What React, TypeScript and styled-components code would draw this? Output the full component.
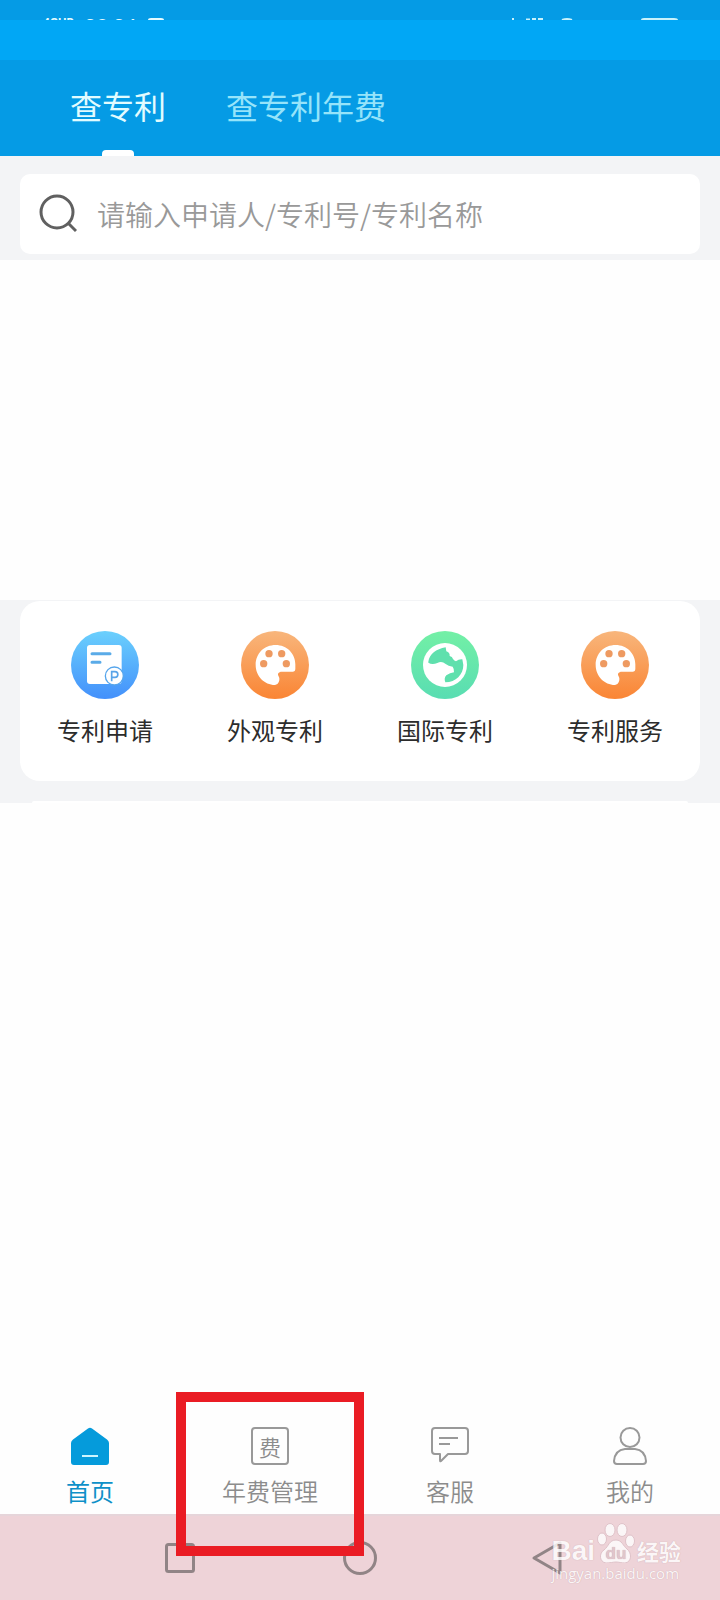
import React from "react";
import styled, { createGlobalStyle } from "styled-components";

const font = `"Noto Sans CJK SC", "Noto Sans", sans-serif`;

const GlobalStyle = createGlobalStyle`
  * { box-sizing: border-box; }
  body { margin: 0; background: #fefefe; font-family: ${font}; }
  button, input { font-family: inherit; border: 0; padding: 0; margin: 0; background: none; }
  svg { display: block; }
`;

const Page = styled.div`
  position: relative;
  display: flex;
  flex-direction: column;
  min-height: 100vh;
`;

const StatusBar = styled.div`
  display: flex;
  align-items: flex-start;
  gap: 10px;
  height: 20px;
  padding: 17px 42px 0 43px;
  overflow: hidden;
  background: #059be5;
  color: #e6fbff;
`;

const Network = styled.span`
  font: 700 12px/12px Roboto, sans-serif;
`;

const Clock = styled.span`
  font: 400 21px/20px Roboto, sans-serif;
`;

const StatusIcons = styled.svg`
  margin-left: auto;
  flex: none;
`;

const Banner = styled.div`
  height: 40px;
  background: #01a7f5;
`;

const TopTabs = styled.nav`
  display: flex;
  gap: 60px;
  height: 96px;
  padding: 0 70px;
  background: #059be5;
`;

const TopTab = styled.button<{ $active?: boolean }>`
  display: flex;
  flex-direction: column;
  align-items: center;
  justify-content: space-between;
  padding-top: 22px;
  font-size: 32px;
  line-height: 46px;
  color: ${(p) => (p.$active ? "#e2fcff" : "#96e4fa")};

  &::after {
    content: "";
    width: 32px;
    height: 6px;
    border-radius: 4px 4px 0 0;
    background: ${(p) => (p.$active ? "#fff" : "transparent")};
  }
`;

const SearchSection = styled.section`
  padding: 18px 20px 6px;
  background: #f3f4f6;
`;

const SearchBox = styled.label`
  display: flex;
  align-items: center;
  gap: 20px;
  height: 80px;
  padding: 0 20px 0 19px;
  border-radius: 10px;
  background: #fff;
`;

const SearchInput = styled.input`
  flex: 1;
  min-width: 0;
  height: 44px;
  font-size: 28px;
  font-weight: 350;
  outline: none;

  &::placeholder { color: #999; opacity: 1; }
`;

const Gap = styled.div`
  height: 340px;
`;

const ServiceSection = styled.section`
  display: flex;
  flex-direction: column;
  gap: 20px;
  padding: 1px 20px 0;
  background: #f3f4f6;
`;

const ServiceCard = styled.div`
  display: grid;
  grid-template-columns: repeat(4, 1fr);
  padding: 30px 0 34px;
  border-radius: 20px;
  background: #fff;
`;

const NextCardEdge = styled.div`
  height: 2px;
  margin: 0 12px;
  border-radius: 8px 8px 0 0;
  background: #fff;
`;

const Service = styled.button`
  display: flex;
  flex-direction: column;
  align-items: center;
  gap: 14px;
  font-size: 24px;
  line-height: 34px;
  color: #2c2c2c;
`;

const Content = styled.main`
  flex: 1;
`;

const BottomTabs = styled.nav`
  display: grid;
  grid-template-columns: repeat(4, 1fr);
  padding: 14px 0 4px;
`;

const BottomTab = styled.button<{ $active?: boolean }>`
  position: relative;
  display: flex;
  flex-direction: column;
  align-items: center;
  gap: 7px;
  font-size: 24px;
  font-weight: ${(p) => (p.$active ? 400 : 350)};
  line-height: 38px;
  color: ${(p) => (p.$active ? "#0e90c8" : "#8c8c8c")};
`;

const FeeIcon = styled.span`
  display: flex;
  align-items: center;
  justify-content: center;
  width: 38px;
  height: 38px;
  border: 2px solid #999;
  border-radius: 4px;
  font-size: 22px;
  line-height: 22px;
`;

const Highlight = styled.span`
  position: absolute;
  z-index: 1;
  top: -35px;
  left: 50%;
  width: 188px;
  height: 164px;
  margin-left: -94px;
  border: 10px solid #ea1c24;
  pointer-events: none;
`;

const SystemBar = styled.footer`
  position: relative;
  height: 86px;
  border-top: 2px solid #e6d5da;
  background: #eed3d8;
`;

const SystemKeys = styled.div`
  display: flex;
  align-items: center;
  justify-content: center;
  gap: 136px;
  padding-top: 20px;
`;

const SystemKey = styled.button`
  width: 44px;
  height: 44px;
`;

const Watermark = styled.div`
  position: absolute;
  z-index: 2;
  right: 39px;
  bottom: 17px;
  display: flex;
  flex-direction: column;
  color: #fff;
  opacity: 0.8;
  text-shadow: 0 0 1px #b9949c;
`;

const WatermarkRow = styled.div`
  display: flex;
  align-items: flex-end;
  gap: 2px;
  height: 40px;
`;

const Brand = styled.span`
  font: 700 28px/38px "Liberation Sans", sans-serif;
  height: 31px;
`;

const BrandName = styled.span`
  height: 29px;
  font-size: 22px;
  font-weight: 700;
  line-height: 32px;
`;

const BrandUrl = styled.span`
  font: 400 15px/20px "Open Sans", sans-serif;
`;

const Disc = ({ id, from, to, children }: { id: string; from: string; to: string; children: React.ReactNode }) => (
  <svg width="68" height="68" viewBox="33 33 204 204" aria-hidden="true">
    <defs>
      <linearGradient id={id} x1="0" y1="0" x2="0" y2="1">
        <stop offset="0" stopColor={from} />
        <stop offset="1" stopColor={to} />
      </linearGradient>
    </defs>
    <circle cx="135" cy="135" r="102" fill={`url(#${id})`} />
    {children}
  </svg>
);

const DocumentIcon = () => (
  <Disc id="doc" from="#6bd0fd" to="#4390fb">
    <rect x="81" y="75" width="104" height="117" rx="9" fill="#fff" />
    <path d="M96 101h54M96 127h24" stroke="#5aabe8" strokeWidth="9" strokeLinecap="round" />
    <circle cx="163" cy="168" r="27" fill="#fff" stroke="#55a5ec" strokeWidth="4" />
    <path d="M155 184v-29h10a8 8 0 0 1 0 17h-10" fill="none" stroke="#5aa4e8" strokeWidth="5" />
  </Disc>
);

const PaletteIcon = ({ id }: { id: string }) => (
  <Disc id={id} from="#f8b67c" to="#fa8534">
    <path
      d="M137 75C170 75 196 100 196 133V148Q196 155 189 155H152Q141 158 145 167Q151 175 146 187Q143 195 135 195C103 195 77 168 77 135C77 100 103 75 137 75Z"
      fill="#fff"
    />
    <g fill="#ee9a61">
      <circle cx="117" cy="101" r="11" />
      <circle cx="155" cy="101" r="11" />
      <circle cx="101" cy="131" r="11" />
      <circle cx="169" cy="131" r="11" />
    </g>
  </Disc>
);

const GlobeIcon = () => (
  <Disc id="globe" from="#73f0a6" to="#59ddb2">
    <circle cx="135" cy="135" r="66" fill="#fff" />
    <path
      d="M85 125C88 103 108 87 137 82L139 94Q150 97 149 108Q157 109 159 117Q163 123 168 124Q176 117 187 118L190 135C190 163 168 187 136 187Q131 175 139 166Q150 159 162 157Q163 147 158 140Q145 139 137 132Q125 121 112 129Q96 135 85 128Z"
      fill="#5fe0ad"
    />
  </Disc>
);

const services = [
  { label: "专利申请", icon: <DocumentIcon /> },
  { label: "外观专利", icon: <PaletteIcon id="look" /> },
  { label: "国际专利", icon: <GlobeIcon /> },
  { label: "专利服务", icon: <PaletteIcon id="service" /> },
];

const SearchIcon = () => (
  <svg width="38" height="40" viewBox="0 0 38 40" fill="none" stroke="#606060" strokeWidth="3" aria-hidden="true">
    <circle cx="18" cy="18" r="16" />
    <path d="M29 29l8 8" />
  </svg>
);

const HomeIcon = () => (
  <svg width="38" height="38" viewBox="0 0 38 38" aria-hidden="true">
    <path d="M17 1.500Q19 0 21 1.500L36 12.500Q38 14 38 16V35Q38 38 35 38H3Q0 38 0 35V16Q0 14 2 12.500Z" fill="#059bdb" />
    <path d="M11 29H27" stroke="#cdf5ff" strokeWidth="2" />
  </svg>
);

const ChatIcon = () => (
  <svg width="38" height="38" viewBox="0 0 38 38" fill="none" stroke="#999" strokeWidth="2" strokeLinejoin="round" aria-hidden="true">
    <path d="M4 1H34Q37 1 37 4V24Q37 27 34 27H17L10 34Q9 35 9 33V27H4Q1 27 1 24V4Q1 1 4 1Z" />
    <path d="M8 11H27M8 17H19" />
  </svg>
);

const UserIcon = () => (
  <svg width="38" height="38" viewBox="0 0 38 38" fill="none" stroke="#999" strokeWidth="2" aria-hidden="true">
    <circle cx="19" cy="10.500" r="9.500" />
    <path d="M14 22H24Q34 23 35 34Q35 37 32 37H6Q3 37 3 34Q4 23 14 22Z" />
  </svg>
);

const PawIcon = () => (
  <svg width="38" height="40" viewBox="0 0 38 40" aria-hidden="true">
    <g fill="#fff" stroke="#dcbfc6" strokeWidth="1">
      <ellipse cx="13" cy="7" rx="5" ry="6.500" />
      <ellipse cx="25" cy="7" rx="5" ry="6.500" />
      <ellipse cx="5" cy="16" rx="4.500" ry="6" />
      <ellipse cx="33" cy="18" rx="4.500" ry="6" />
      <path d="M19 17C25 17 26 23 30 26C35 30 35 39 28 40C24 40 22 39 19 39C16 39 13 40 9 40C2 39 2 30 7 27C12 23 12 17 19 17Z" />
    </g>
    <text x="19" y="36" textAnchor="middle" fontFamily="Liberation Sans, sans-serif" fontWeight="700" fontSize="17" fill="#dfc3ca">
      du
    </text>
  </svg>
);

export default function App() {
  return (
    <>
      <GlobalStyle />
      <Page>
        <StatusBar>
          <Network>4GHD</Network>
          <Clock>08:04</Clock>
          <svg width="18" height="3" viewBox="0 0 18 3" aria-hidden="true">
            <path d="M1 3Q1 1 4 1H14Q17 1 17 3Z" fill="#e6fbff" />
          </svg>
          <StatusIcons width="166" height="3" viewBox="0 0 166 3" fill="none" stroke="#c9f2fb" strokeWidth="2" aria-hidden="true">
            <path d="M0 2h2M14 2.500h4M20 2h4M26 2h5M50 3q5-2 10 0" />
            <path d="M130 4V3q0-1 2-1h30q3 0 3 1v1" />
          </StatusIcons>
        </StatusBar>
        <Banner />
        <TopTabs>
          <TopTab $active>查专利</TopTab>
          <TopTab>查专利年费</TopTab>
        </TopTabs>
        <SearchSection>
          <SearchBox>
            <SearchIcon />
            <SearchInput type="text" aria-label="搜索" placeholder="请输入申请人/专利号/专利名称" />
          </SearchBox>
        </SearchSection>
        <Gap />
        <ServiceSection>
          <ServiceCard>
            {services.map((s) => (
              <Service key={s.label}>
                {s.icon}
                {s.label}
              </Service>
            ))}
          </ServiceCard>
          <NextCardEdge />
        </ServiceSection>
        <Content />
        <BottomTabs>
          <BottomTab $active>
            <HomeIcon />
            首页
          </BottomTab>
          <BottomTab>
            <FeeIcon>费</FeeIcon>
            年费管理
            <Highlight />
          </BottomTab>
          <BottomTab>
            <ChatIcon />
            客服
          </BottomTab>
          <BottomTab>
            <UserIcon />
            我的
          </BottomTab>
        </BottomTabs>
        <SystemBar>
          <SystemKeys>
            <SystemKey aria-label="最近任务">
              <svg width="44" height="44" viewBox="0 0 44 44" fill="none" stroke="#918486" strokeWidth="3" aria-hidden="true">
                <rect x="8.500" y="8.500" width="27" height="27" rx="2" />
              </svg>
            </SystemKey>
            <SystemKey aria-label="主屏幕">
              <svg width="44" height="44" viewBox="0 0 44 44" fill="none" stroke="#918486" strokeWidth="3" aria-hidden="true">
                <circle cx="22" cy="22" r="15.500" />
              </svg>
            </SystemKey>
            <SystemKey aria-label="返回">
              <svg width="44" height="44" viewBox="0 0 44 44" fill="none" stroke="#918486" strokeWidth="3" strokeLinejoin="round" aria-hidden="true">
                <path d="M16 22L42 7V37Z" />
              </svg>
            </SystemKey>
          </SystemKeys>
          <Watermark>
            <WatermarkRow>
              <Brand>Bai</Brand>
              <PawIcon />
              <BrandName>经验</BrandName>
            </WatermarkRow>
            <BrandUrl>jingyan.baidu.com</BrandUrl>
          </Watermark>
        </SystemBar>
      </Page>
    </>
  );
}
